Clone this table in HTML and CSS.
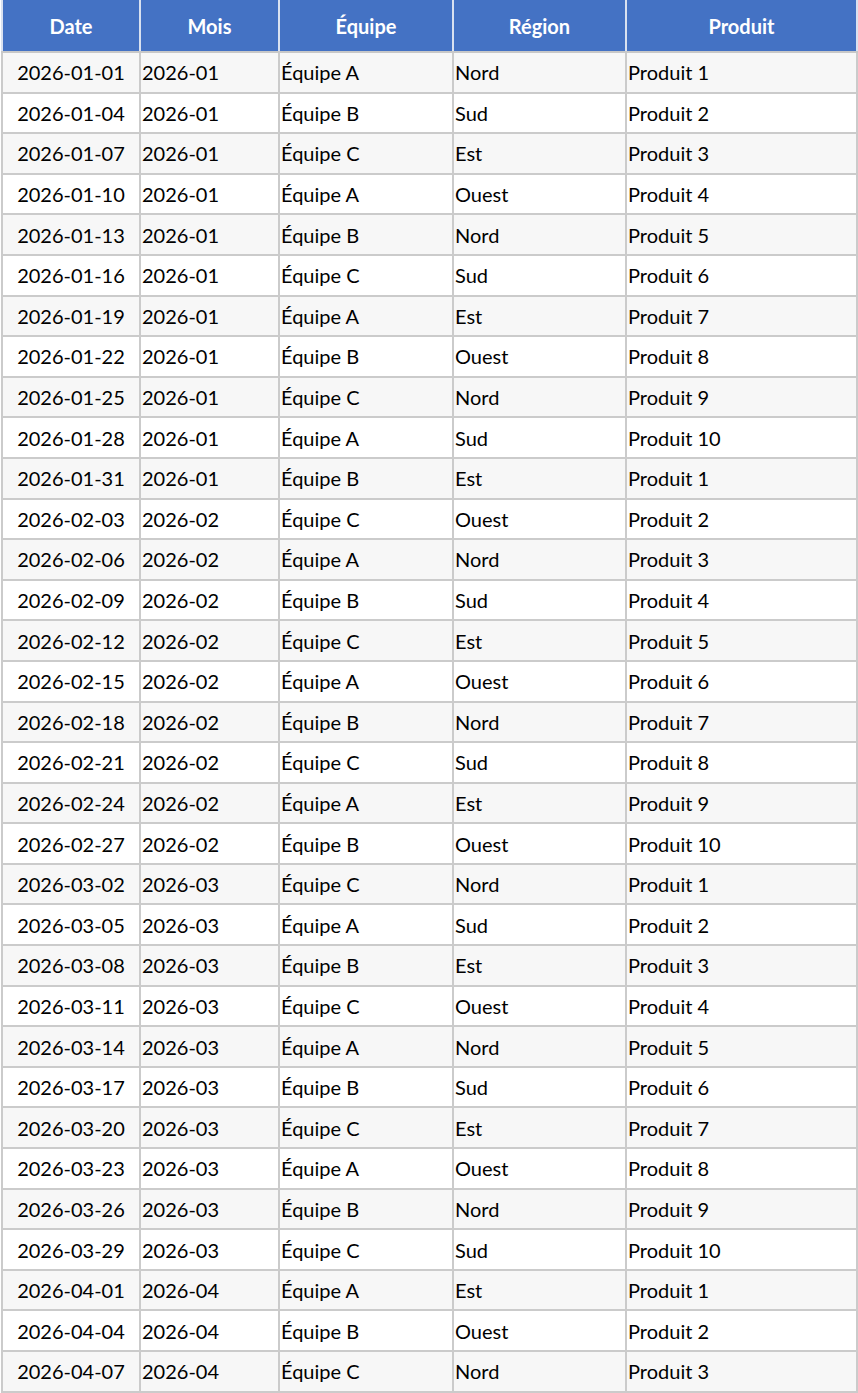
FILE: index.html
```html
<!DOCTYPE html>
<html lang="fr">
<head>
<meta charset="utf-8">
<title>Tableau</title>
<link rel="stylesheet" href="styles.css">
</head>
<body>
<table class="grid">
<colgroup>
<col class="c-date"><col class="c-mois"><col class="c-equipe"><col class="c-region"><col class="c-produit">
</colgroup>
<thead>
<tr><th>Date</th><th>Mois</th><th>Équipe</th><th>Région</th><th>Produit</th></tr>
</thead>
<tbody id="rows">
<tr><td class="d">2026-01-01</td><td>2026-01</td><td>Équipe A</td><td>Nord</td><td>Produit 1</td></tr>
<tr><td class="d">2026-01-04</td><td>2026-01</td><td>Équipe B</td><td>Sud</td><td>Produit 2</td></tr>
<tr><td class="d">2026-01-07</td><td>2026-01</td><td>Équipe C</td><td>Est</td><td>Produit 3</td></tr>
<tr><td class="d">2026-01-10</td><td>2026-01</td><td>Équipe A</td><td>Ouest</td><td>Produit 4</td></tr>
<tr><td class="d">2026-01-13</td><td>2026-01</td><td>Équipe B</td><td>Nord</td><td>Produit 5</td></tr>
<tr><td class="d">2026-01-16</td><td>2026-01</td><td>Équipe C</td><td>Sud</td><td>Produit 6</td></tr>
<tr><td class="d">2026-01-19</td><td>2026-01</td><td>Équipe A</td><td>Est</td><td>Produit 7</td></tr>
<tr><td class="d">2026-01-22</td><td>2026-01</td><td>Équipe B</td><td>Ouest</td><td>Produit 8</td></tr>
<tr><td class="d">2026-01-25</td><td>2026-01</td><td>Équipe C</td><td>Nord</td><td>Produit 9</td></tr>
<tr><td class="d">2026-01-28</td><td>2026-01</td><td>Équipe A</td><td>Sud</td><td>Produit 10</td></tr>
<tr><td class="d">2026-01-31</td><td>2026-01</td><td>Équipe B</td><td>Est</td><td>Produit 1</td></tr>
<tr><td class="d">2026-02-03</td><td>2026-02</td><td>Équipe C</td><td>Ouest</td><td>Produit 2</td></tr>
<tr><td class="d">2026-02-06</td><td>2026-02</td><td>Équipe A</td><td>Nord</td><td>Produit 3</td></tr>
<tr><td class="d">2026-02-09</td><td>2026-02</td><td>Équipe B</td><td>Sud</td><td>Produit 4</td></tr>
<tr><td class="d">2026-02-12</td><td>2026-02</td><td>Équipe C</td><td>Est</td><td>Produit 5</td></tr>
<tr><td class="d">2026-02-15</td><td>2026-02</td><td>Équipe A</td><td>Ouest</td><td>Produit 6</td></tr>
<tr><td class="d">2026-02-18</td><td>2026-02</td><td>Équipe B</td><td>Nord</td><td>Produit 7</td></tr>
<tr><td class="d">2026-02-21</td><td>2026-02</td><td>Équipe C</td><td>Sud</td><td>Produit 8</td></tr>
<tr><td class="d">2026-02-24</td><td>2026-02</td><td>Équipe A</td><td>Est</td><td>Produit 9</td></tr>
<tr><td class="d">2026-02-27</td><td>2026-02</td><td>Équipe B</td><td>Ouest</td><td>Produit 10</td></tr>
<tr><td class="d">2026-03-02</td><td>2026-03</td><td>Équipe C</td><td>Nord</td><td>Produit 1</td></tr>
<tr><td class="d">2026-03-05</td><td>2026-03</td><td>Équipe A</td><td>Sud</td><td>Produit 2</td></tr>
<tr><td class="d">2026-03-08</td><td>2026-03</td><td>Équipe B</td><td>Est</td><td>Produit 3</td></tr>
<tr><td class="d">2026-03-11</td><td>2026-03</td><td>Équipe C</td><td>Ouest</td><td>Produit 4</td></tr>
<tr><td class="d">2026-03-14</td><td>2026-03</td><td>Équipe A</td><td>Nord</td><td>Produit 5</td></tr>
<tr><td class="d">2026-03-17</td><td>2026-03</td><td>Équipe B</td><td>Sud</td><td>Produit 6</td></tr>
<tr><td class="d">2026-03-20</td><td>2026-03</td><td>Équipe C</td><td>Est</td><td>Produit 7</td></tr>
<tr><td class="d">2026-03-23</td><td>2026-03</td><td>Équipe A</td><td>Ouest</td><td>Produit 8</td></tr>
<tr><td class="d">2026-03-26</td><td>2026-03</td><td>Équipe B</td><td>Nord</td><td>Produit 9</td></tr>
<tr><td class="d">2026-03-29</td><td>2026-03</td><td>Équipe C</td><td>Sud</td><td>Produit 10</td></tr>
<tr><td class="d">2026-04-01</td><td>2026-04</td><td>Équipe A</td><td>Est</td><td>Produit 1</td></tr>
<tr><td class="d">2026-04-04</td><td>2026-04</td><td>Équipe B</td><td>Ouest</td><td>Produit 2</td></tr>
<tr><td class="d">2026-04-07</td><td>2026-04</td><td>Équipe C</td><td>Nord</td><td>Produit 3</td></tr>
</tbody>
</table>
</body>
</html>
```
FILE: styles.css
```css
html, body {
  margin: 0;
  padding: 0;
  background: #ffffff;
}
body {
  padding: 0 0 0 1px;
  font-family: "Lato", "Liberation Sans", sans-serif;
  font-size: 20px;
  color: #000000;
}
.grid {
  border-collapse: collapse;
  table-layout: fixed;
  width: 855px;
}
.c-date { width: 138px; }
.c-mois { width: 139px; }
.c-equipe { width: 174px; }
.c-region { width: 173px; }
.c-produit { width: 231px; }

.grid th {
  background: #4472c4;
  color: #ffffff;
  font-weight: 700;
  text-align: center;
  height: 52px;
  padding: 0;
  border: 2px solid #d9e1f0;
  border-top: 0;
  border-bottom: 2px solid #c8c8c8;
  box-sizing: border-box;
}
.grid td {
  height: 40.6px;
  padding: 0 1px;
  border: 2px solid #cbcbcb;
  white-space: nowrap;
  box-sizing: border-box;
  vertical-align: middle;
}
.grid td.d {
  text-align: center;
}
.grid tbody tr:nth-child(odd) td {
  background: #f7f7f7;
}
.grid tbody tr:nth-child(even) td {
  background: #ffffff;
}
```
